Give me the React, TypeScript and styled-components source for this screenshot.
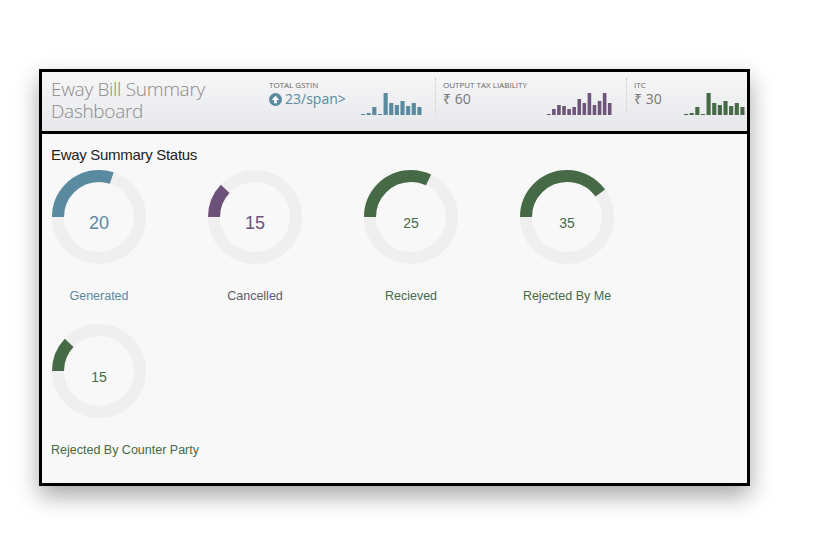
import React from "react";
import styled, { createGlobalStyle } from "styled-components";

const G = createGlobalStyle`
  body { margin:0; background:#fff; font-family: "Open Sans", sans-serif; }
`;
const Page = styled.div`width:820px;height:558px;padding:69px 0 0 39px;box-sizing:border-box;`;
const Frame = styled.div`
  width:711px;height:417px;box-sizing:border-box;border:3px solid #000;
  box-shadow:0 10px 22px rgba(0,0,0,0.35);display:flex;flex-direction:column;background:#f8f8f8;
`;
const Header = styled.div`
  height:62px;box-sizing:border-box;border-bottom:3px solid #000;
  background:linear-gradient(#f7f7f8,#e6e7ea);display:flex;align-items:flex-start;padding:6px 0 0 9px;
`;
const Title = styled.div`
  width:218px;font-size:19px;font-weight:300;color:#8a8a8a;line-height:22px;letter-spacing:-0.3px;
`;
const Stat = styled.div<{ $w: number; $sep?: boolean }>`
  width:${p => p.$w}px;display:flex;align-items:flex-start;box-sizing:border-box;
  ${p => p.$sep ? "border-left:1px dotted #ccc;padding-left:7px;" : ""}
  height:36px;
`;
const StatText = styled.div<{ $w: number }>`width:${p => p.$w}px;`;
const StatLabel = styled.div`font-size:8px;color:#666;line-height:10px;margin-top:2px;`;
const StatVal = styled.div<{ $c: string }>`font-size:14px;color:${p => p.$c};line-height:18px;display:flex;align-items:center;gap:3px;`;
const Body = styled.div`flex:1;padding:12px 0 0 9px;`;
const H = styled.div`font-family:"Liberation Sans",Arial,sans-serif;font-size:15px;color:#222;margin-bottom:6px;letter-spacing:-0.3px;`;
const Grid = styled.div`display:grid;grid-template-columns:repeat(4,156px);row-gap:20px;`;
const Item = styled.div`display:flex;flex-direction:column;align-items:flex-start;`;
const DonutWrap = styled.div`position:relative;width:96px;height:96px;`;
const Num = styled.div<{ $c: string; $s: number }>`
  position:absolute;inset:0;display:flex;align-items:center;justify-content:center;padding-top:12px;box-sizing:border-box;
  font-family:"Liberation Sans",Arial,sans-serif;font-size:${p => p.$s}px;color:${p => p.$c};
`;
const Label = styled.div<{ $c: string; $center?: boolean }>`
  font-family:"Liberation Sans",Arial,sans-serif;font-size:12.5px;color:${p => p.$c};margin-top:24px;
  ${p => p.$center ? "width:96px;text-align:center;white-space:nowrap;display:flex;justify-content:center;" : ""}
`;

const Bars = ({ h, c, w }: { h: number[]; c: string; w: number }) => (
  <svg width={w} height="24" style={{ marginTop: 13 }}>
    {h.map((v, i) => <rect key={i} x={i * (w / h.length)} y={24 - v} width={w / h.length - 1.5} height={v} fill={c} />)}
  </svg>
);

const Donut = ({ f, c, n, ns }: { f: number; c: string; n: number; ns: number }) => {
  const r = 41, C = 2 * Math.PI * r;
  return (
    <DonutWrap>
      <svg width="96" height="96" style={{ transform: "rotate(180deg)" }}>
        <circle cx="48" cy="48" r={r} fill="none" stroke="#efefef" strokeWidth="12" />
        <circle cx="48" cy="48" r={r} fill="none" stroke={c} strokeWidth="12" strokeDasharray={`${C * f} ${C}`} />
      </svg>
      <Num $c={c} $s={ns}>{n}</Num>
    </DonutWrap>
  );
};

const items = [
  { f: 0.3, c: "#5a8aa0", n: 20, ns: 18, l: "Generated", lc: "#5a8aa0" },
  { f: 0.12, c: "#6c5278", n: 15, ns: 18, l: "Cancelled", lc: "#5f5a66" },
  { f: 0.32, c: "#466a45", n: 25, ns: 14, l: "Recieved", lc: "#466a45" },
  { f: 0.4, c: "#466a45", n: 35, ns: 14, l: "Rejected By Me", lc: "#466a45" },
];

export default function App() {
  return (
    <Page>
      <G />
      <Frame>
        <Header>
          <Title>Eway Bill Summary Dashboard</Title>
          <Stat $w={166}>
            <StatText $w={92}>
              <StatLabel>TOTAL GSTIN</StatLabel>
              <StatVal $c="#5a8aa0">
                <svg width="13" height="13" viewBox="0 0 14 14"><circle cx="7" cy="7" r="7" fill="#5a8aa0" /><path d="M7 3 L11 7.5 H8.5 V11 H5.5 V7.5 H3 Z" fill="#fff" /></svg>
                23/span&gt;
              </StatVal>
            </StatText>
            <Bars w={62} c="#5a8aa0" h={[1, 2, 8, 1, 22, 12, 10, 14, 9, 12, 8]} />
          </Stat>
          <Stat $w={191} $sep>
            <StatText $w={104}>
              <StatLabel>OUTPUT TAX LIABILITY</StatLabel>
              <StatVal $c="#777">₹ 60</StatVal>
            </StatText>
            <Bars w={66} c="#6e5478" h={[1, 6, 10, 9, 6, 8, 16, 12, 22, 10, 14, 22, 12]} />
          </Stat>
          <Stat $w={120} $sep>
            <StatText $w={50}>
              <StatLabel>ITC</StatLabel>
              <StatVal $c="#777">₹ 30</StatVal>
            </StatText>
            <Bars w={62} c="#466a45" h={[1, 2, 8, 1, 22, 12, 10, 14, 9, 12, 8]} />
          </Stat>
        </Header>
        <Body>
          <H>Eway Summary Status</H>
          <Grid>
            {items.map(it => (
              <Item key={it.l}>
                <Donut f={it.f} c={it.c} n={it.n} ns={it.ns} />
                <Label $c={it.lc} $center>{it.l}</Label>
              </Item>
            ))}
            <Item>
              <Donut f={0.12} c="#466a45" n={15} ns={14} />
              <Label $c="#466a45">Rejected By Counter Party</Label>
            </Item>
          </Grid>
        </Body>
      </Frame>
    </Page>
  );
}
